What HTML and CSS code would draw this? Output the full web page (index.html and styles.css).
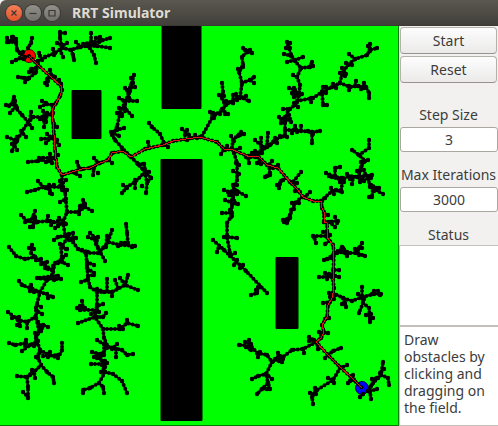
FILE: index.html
```html
<!DOCTYPE html>
<html lang="en">
<head>
<meta charset="utf-8">
<title>RRT Simulator</title>
<link rel="stylesheet" href="styles.css">
</head>
<body>
<div class="window">
  <header class="titlebar">
    <div class="window-buttons">
      <button class="wb wb-close" aria-label="Close"><svg viewBox="0 0 16 16"><path d="M5.500 5.500l5 5m0-5l-5 5"/></svg></button>
      <button class="wb" aria-label="Minimize"><svg viewBox="0 0 16 16"><path d="M4.500 8.500h7"/></svg></button>
      <button class="wb" aria-label="Maximize"><svg viewBox="0 0 16 16"><path d="M5 5.500h6v5.500h-6z"/></svg></button>
    </div>
    <h1 class="title">RRT Simulator</h1>
  </header>
  <main class="content">
    <svg class="field" viewBox="0 26 399 400" role="img" aria-label="Field">
      <defs>
        <marker id="node" viewBox="-3 -3 6 6" markerWidth="6" markerHeight="6" markerUnits="userSpaceOnUse">
          <circle class="node" r="2.200"/>
        </marker>
        <path id="route" d="M29 56L38 65 51 77 61 86 62 90 60 96 56 103 53 108 52 114 53 122 54 135 55 150 57 167 62 175 72 172 82 169 90 168 100 163 108 160 112 153 123 151 131 157 145 149 163 145 173 141 200 137 217 142 224 149 233 150 250 157 258 156 267 165 278 168 290 182 298 190 303 197 313 201 321 201 322 208 324 212 324 222 327 223 327 237 333 245 334 253 333 280 334 288 332 298 328 305 327 317 322 325 324 332 321 338 316 342 328 355 340 367 352 378 362 388"/>
        <path id="tree" d="
          M13 37L16 42 17 50 20 53 25 57M7 38L9 42 16 42M12 37L16 39M12 62L16 60 20 58 24 59M32 38L31 43 28 48M20 53L23 52M7 42L13 40
          M38 61L45 57 55 53 62 48 60 38 60 32M65 33L60 33M57 43L62 46 67 43M62 48L71 50 80 47 88 46 91 41 91 33M71 50L73 55 74 60M76 42L80 47M88 46L100 41 110 38M100 37L99 42M90 46L97 46 110 48M90 48L94 55 96 63M63 57L60 50M45 57L42 60M53 49L54 55M39 53L40 56M83 44L95 42M96 38L102 40
          M38 65L35 73 29 78 24 78 18 77M25 82L29 78M29 72L36 72M36 68L31 69M47 85L47 79 50 76M50 70L51 75 55 77M45 83L48 81M59 80L61 84
          M53 113L43 117 33 117 28 122 22 115 15 107 13 102 14 97M6 105L15 105 17 108M10 113L16 106M28 122L22 132 17 140 12 151M7 137L17 141M17 150L14 145M31 112L30 120M32 128L28 122M26 137L21 131M40 107L46 104 53 105M42 101L46 103M43 111L45 117 44 127M40 119L45 121M47 113L46 122M15 101L9 106M12 144L17 137
          M41 139L52 138 57 140M57 127L54 124M59 145L54 138M46 143L50 138M47 134L52 138
          M134 75L131 85 129 93 125 102 120 113 117 127 112 135 115 140 122 148 131 157M131 78L133 83M125 88L130 91M137 101L125 101M132 116L125 108M117 113L122 114M124 128L117 130M119 98L124 101M135 87L130 88M125 104L125 111M119 108L122 116M111 132L119 136M127 90L130 100
          M149 123L152 127 160 134 164 143M148 142L149 148M168 147L163 144
          M28 162L38 161 43 158 55 158 58 155M52 163L52 158M50 154L49 161M39 158L46 162
          M62 175L62 183 65 192 67 212 63 222 65 235M27 192L35 190 43 187 62 187M38 181L43 187M50 193L49 185M60 202L66 199M66 180L60 186 67 190M46 188L54 185M52 194L49 189M60 181L62 190
          M67 212L78 212 85 207 83 200M92 211L85 207M79 214L80 209M85 204L80 206M77 162L79 168M80 176L75 173M94 158L98 163M93 175L94 168M112 163L109 160M98 173h0M142 186h0
          M21 215L27 221 37 222 47 221 53 222 63 223M35 211L33 217 37 222M30 227L37 222M48 216L47 221M55 228L63 223M33 227L35 219M58 221L58 226M50 221L51 225M59 218L66 224M25 222L35 217
          M54 240L58 237 65 236M67 238L61 248 62 260 55 263 52 275 47 280 40 292 36 308 36 318 39 330 36 338 40 350 38 358 41 365 33 373 27 377 28 387 28 398M23 392L28 397M17 376L27 377M41 365L47 372 53 377 54 383M35 378L34 372M32 370L30 375M60 244L66 249M63 257L58 263M53 266L53 272
          M9 247L16 256 25 259 35 257 45 265 52 270M32 245L31 253 35 257M29 248L34 249M68 265L62 262M67 249L62 247M40 278L52 276 58 276M36 260L41 259M41 264L47 262M45 268L48 269M66 255L62 258
          M19 281L22 285 32 289 40 292 53 297M37 278L46 279 61 279M31 285L34 292M48 298L47 294M58 277L54 280M30 291L40 292M8 312L18 320 27 322 35 317M17 325L20 321M27 328L27 322M12 318L19 317M20 326L20 321M41 307L37 305M42 314L37 311M48 327L43 325 39 327M38 322L42 328M41 331L36 336M9 343L15 345 26 343M26 340L25 346M22 351L30 345 36 342M40 350L47 354 58 358 62 350 62 343M43 356L58 355M35 333L38 341 34 346M36 357L40 352M50 352L48 357
          M67 237L73 242 78 249 86 253 87 265 88 278 90 287 97 292 97 305 95 317 103 329 104 338 108 347 100 355 103 365 105 372 99 383 90 388 83 390 83 393M99 383L103 387 104 393M105 372L113 374 122 381 127 393M91 364L103 364M92 352L103 355M97 340L108 347 122 350 127 355 133 354M117 344L112 349M116 357L116 349M97 358L105 361M101 372L105 367M104 344L104 355M94 357L97 354M107 363L102 365
          M103 329L120 329 127 323 138 326M127 320L127 323M119 326L123 329M78 323L95 317M77 308L80 310 97 310M82 301L83 309M80 306L85 308M106 313L103 317 97 317M103 304L97 306M91 314L99 312M81 282L87 280M88 276L94 275M97 292L112 292 125 285 138 290M107 279L107 291M115 280L118 288M112 296L112 292M120 278L125 285 128 275M97 289L104 292
          M73 233L73 241M76 238L71 239M69 234L69 240M86 253L98 253 103 248 108 242 120 245 135 246M128 243L127 233 126 224M112 230L108 242M90 233L95 238 98 248 105 261M88 237L95 240M94 265L87 262M94 273L87 268M98 237L96 244M107 236L106 247M121 243L118 246M82 250L88 252M125 243L132 247
          M131 157L137 163 145 172 151 178M145 172L147 183 146 193M145 172L135 182 127 187 122 193M123 185L127 188M135 180L135 188M144 164L145 170M138 164L144 164M149 172L143 169M148 181L151 178
          M202 136L212 118 222 110 228 103 240 97 242 83 239 72 243 65 242 57 247 52 243 48M252 53L247 52M250 50L245 50M238 69L243 67M242 83L250 80 254 77M254 83L250 80M240 97L249 101M222 83L223 92 222 98 225 105M219 95L224 96M233 103L233 95M237 100L236 94M210 112L214 118M228 114L222 110M182 129L189 135M187 130L185 135M195 135L197 138M225 114L222 109M246 96L240 98M226 101L233 103M213 113L220 114M187 140L190 138
          M221 154L224 149M232 148L233 140 241 132M244 134L238 136M231 136L234 141M227 146L225 150M268 133L267 145 257 153M255 140L263 147M280 137L273 142 267 147M261 138L261 146M252 153L262 153M255 151L257 157
          M287 42L289 48 291 55 295 61 301 68 297 77 300 85 299 95 297 102 295 105 288 110 285 122 285 135 275 140 270 145 262 150M284 54L291 56M287 62L295 60 303 57M301 68L310 67 312 62M313 66L309 67M293 75L297 77M289 88L295 90 297 94M292 93L298 96M286 48L290 48M290 43L288 46M294 88L293 94M294 97L302 94
          M297 101L313 98 322 92 332 87 340 83 342 73 348 65 355 59 367 55 370 50 377 48M370 44L370 50M368 46L370 51M349 54L355 59M342 68L346 74M346 63L352 65M340 73L345 76M340 83L350 87 358 86 366 87 369 93 369 98M349 90L349 86M356 81L355 86M364 83L364 88M361 89L364 86M323 87L322 92 323 105 327 105M311 102L311 98M298 107L294 103M333 84L336 88M326 87L326 93M283 109L290 109M279 117L285 120M291 122L285 117M281 123L290 119M281 119L289 115M285 130L295 130 312 132 320 131M312 132L312 143M301 126L301 131M295 126L297 132M292 133L295 128M277 143L275 138M287 137L280 136M308 131L313 134
          M301 172L293 182M265 177L270 175 269 165M270 173L267 176M277 185L283 180 286 178M279 188L281 181M297 183L293 184M272 161L269 165M278 165L273 168M310 192L305 197M295 191L300 192M302 197L295 203 290 215 287 223M283 220L290 218M284 222L290 217M292 203L299 203M291 210L294 209
          M321 201L332 191 341 190 343 180 348 176 358 177 372 175M326 173L335 177 343 178M340 167L335 168 335 177M352 184L353 177M358 177L361 167 365 161 359 155 352 150M359 155L369 148 369 140M360 182L363 177M357 171L364 170M368 178L370 187 383 194M373 187L372 197 369 197M379 188L374 191M359 172L360 179M361 162L368 160M340 182L344 182M325 198L322 201M332 177L339 179M347 174L350 179M331 188L334 194M365 174L371 178M364 181L369 177M377 188L371 185M329 176L335 177M336 190L342 192
          M324 222L338 221M335 217L337 223M335 227L330 222M328 215L324 213M313 236L327 236M316 243L314 237M329 241L325 244M330 235L327 232M323 232L327 231M334 253L343 248 348 253 357 253 365 256M362 243L357 252M347 256L347 252M355 249L359 255M342 247L345 253M337 253L343 252M359 248L362 248M324 260L332 258M327 259L333 255M339 270L333 270M319 277L333 277M339 277L335 276M325 273L327 279M329 274L333 275
          M333 293L343 298 352 301 362 297 374 294 381 294M362 287L362 297 363 303 359 313M363 303L369 308 370 322M373 318L370 318M374 291L372 294M343 298L346 307M342 304L345 303M323 303L330 302M329 318L325 319M328 333L322 333M309 337L316 342M319 332L321 335M309 341L314 340M329 293L335 295M358 294L364 299M330 297L334 299M366 315L371 314M378 291L380 295
          M316 342L303 349 292 350 283 357 272 362 267 355 257 353 251 346 239 345M249 340L251 346M278 353L283 359M304 353L303 349M272 362L266 374 268 383 257 394M252 379L258 376 266 374M272 379L268 376M270 389L268 383M262 389L267 389M318 349L317 343M258 357L260 352M282 362L278 357M275 359L279 361M246 347L251 350M245 342L251 344
          M328 355L333 351 341 348M325 358L328 355M340 368L333 380 317 390 312 397 313 404M310 393L316 394M347 365L341 368M348 383L352 378 353 375M328 378L333 380 334 383M315 388L315 392M350 381L354 380
          M213 240L224 250 246 271 267 293M234 153L237 163 237 180 232 192 232 205 231 217 227 223 227 237 230 253M217 252L219 246M224 237L228 237 237 238M235 253L230 256M243 265L240 268M237 260L234 265M251 295L257 293 258 287M256 290L260 287M224 190L232 193 237 191 246 196M229 195L237 194M225 200L232 203 238 204M222 213L232 213M233 171L239 174M239 165L236 163M233 185L237 185M233 197L235 203M228 192L235 190M230 210L232 216M249 163L248 157M257 163L261 164 258 157M255 152L255 157M252 154L246 157M240 148L234 151"/>
        <path id="goal-branches" d="M368 391L371 386 375 380 381 375 383 362M381 375L388 378 389 385M360 397L363 394M370 391L377 389M371 399L370 392M372 379L377 378M384 369L380 373M378 378L373 383"/>
      </defs>
      <rect class="ground" y="26" width="399" height="400"/>
      <path class="ground-edge" d="M398.500 26v399.500H0"/>
      <g class="obstacles">
        <path d="M162 25h39v83.500h-39zM161 159.500h41v261h-41zM72 90.500h29v48h-29zM276 257.500h22v71h-22z"/>
      </g>
      <g class="edges"><use href="#route"/></g>
      <circle class="start-point" cx="29" cy="56" r="6.500"/>
      <circle class="goal-point" cx="362" cy="388" r="6.500"/>
      <g class="edges"><use href="#tree"/><use href="#goal-branches"/></g>
      <g class="nodes"><use href="#tree"/><use href="#route"/><use href="#goal-branches"/></g>
      <use class="route" href="#route"/>
    </svg>
    <form class="panel">
      <div class="actions">
        <button class="button" type="button">Start</button>
        <button class="button" type="button">Reset</button>
      </div>
      <div class="group">
        <label for="step">Step Size</label>
        <input id="step" type="text" value="3">
      </div>
      <div class="group">
        <label for="iterations">Max Iterations</label>
        <input id="iterations" type="text" value="3000">
      </div>
      <div class="group group-status">
        <label for="status">Status</label>
        <textarea id="status" readonly></textarea>
      </div>
      <p class="hint">Draw obstacles by clicking and dragging on the field.</p>
    </form>
  </main>
</div>
</body>
</html>
```
FILE: styles.css
```css
* {
  box-sizing: border-box;
}

body {
  margin: 0;
  background: #f2f1f0;
  color: #3c3c3c;
  font: 14px/17px "Noto Sans", "Open Sans", sans-serif;
}

.window {
  display: flex;
  flex-direction: column;
  min-height: 100vh;
}

.titlebar {
  display: flex;
  align-items: center;
  gap: 12px;
  height: 26px;
  padding: 0 6px;
  border-bottom: 1px solid #3a3934;
  border-radius: 6px 0 0 0;
  background: linear-gradient(#5a584f, #403f3a);
}

.window-buttons {
  display: flex;
  gap: 3px;
}

.wb {
  width: 16px;
  height: 16px;
  padding: 0;
  border: 0;
  border-radius: 50%;
  background: linear-gradient(#92908a, #73716b);
  box-shadow: 0 0 0 1px #383732;
}

.wb-close {
  background: linear-gradient(#f58059, #e2532a);
}

.wb svg {
  display: block;
  fill: none;
  stroke: #3a3833;
  stroke-width: 1.2;
}

.title {
  margin: 0;
  color: #dfdbd2;
  font-size: 14px;
  font-weight: 700;
}

.content {
  display: grid;
  grid-template-columns: 1fr 99px;
  flex: 1;
}

.field {
  display: block;
  width: 100%;
}

.ground {
  fill: #0f0;
}

.ground-edge {
  fill: none;
  stroke: #007a00;
}

.obstacles {
  fill: #000;
  stroke: #000;
  stroke-width: 1;
}

.start-point {
  fill: #f00;
  stroke: #500;
}

.goal-point {
  fill: #00f;
  stroke: #004;
}

.edges,
.nodes {
  fill: none;
  stroke: #000;
  stroke-linecap: round;
  stroke-linejoin: round;
}

.edges {
  stroke-width: 2;
}

.edges use {
  marker: url(#node);
}

.node {
  fill: #000;
  stroke: none;
}

.nodes {
  stroke-width: 4;
  stroke-dasharray: 0 4;
}

.route {
  fill: none;
  stroke: #e01010;
  stroke-width: 1;
  shape-rendering: crispEdges;
}

.panel {
  display: flex;
  flex-direction: column;
  min-width: 0;
}

.actions {
  display: grid;
  gap: 2px;
  padding: 1px 1px 9px;
}

.button {
  height: 27px;
  padding: 0;
  border: 1px solid #b5b1ab;
  border-bottom-color: #96928c;
  border-radius: 4px;
  background: linear-gradient(#fdfdfd, #ebeae9);
  color: inherit;
  font: inherit;
}

.group {
  display: flex;
  flex-direction: column;
  padding-top: 13px;
}

.group label {
  height: 22px;
  line-height: 20px;
  text-align: center;
  white-space: nowrap;
}

.group input {
  width: calc(100% - 1px);
  height: 25px;
  margin-left: 1px;
  padding: 0;
  border: 1px solid #aaa6a0;
  border-radius: 3px;
  background: #fff;
  color: inherit;
  font: inherit;
  text-align: center;
}

.group-status {
  flex: 1;
}

.group-status label {
  height: 20px;
}

.group textarea {
  flex: 1;
  width: 100%;
  min-height: 40px;
  border: 1px solid #c4c0bb;
  border-right: 0;
  background: #fff;
  font: inherit;
  resize: none;
}

.hint {
  margin: 0;
  padding: 4px 2px 9px 4px;
  border: 1px solid #c4c0bb;
  border-right: 0;
  background: #fff;
}
```
